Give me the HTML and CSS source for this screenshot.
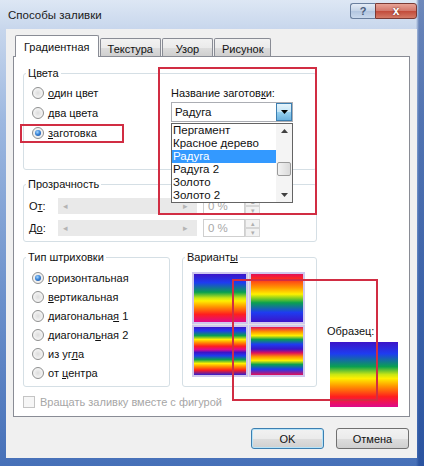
FILE: index.html
```html
<!DOCTYPE html>
<html lang="ru">
<head>
  <meta charset="UTF-8">
  <title>Способы заливки</title>
  <link rel="stylesheet" href="styles.css">
</head>
<body>
  <div class="window">
    <header class="titlebar">
      <span class="title">Способы заливки</span>
      <div class="caption-buttons">
        <span class="cap-btn cap-help">?</span>
        <span class="cap-btn cap-close">x</span>
      </div>
    </header>

    <div class="client">
      <div class="tabs">
        <div class="tab active">Градиентная</div>
        <div class="tab">Текстура</div>
        <div class="tab">Узор</div>
        <div class="tab">Рисунок</div>
      </div>

      <div class="panel">
        <div class="main">
          <div class="left-col">
            <!-- Цвета -->
            <div class="group colors">
              <div class="group-title">Цвета</div>
              <div class="colors-body">
                <div class="radios">
                  <div class="radio"><span class="radio-dot"></span><span><u>о</u>дин цвет</span></div>
                  <div class="radio"><span class="radio-dot"></span><span><u>д</u>ва цвета</span></div>
                  <div class="radio"><span class="radio-dot checked"></span><span><u>з</u>аготовка</span></div>
                </div>
                <div class="preset">
                  <div class="preset-label">Название заготов<u>к</u>и:</div>
                  <div class="combo">
                    <span class="combo-value">Радуга</span>
                    <span class="combo-btn">
                      <svg width="7" height="4" viewBox="0 0 7 4"><path d="M0 0h7L3.5 4z" fill="#000"/></svg>
                    </span>
                    <div class="dropdown">
                      <div class="items">
                        <div class="item">Пергамент</div>
                        <div class="item">Красное дерево</div>
                        <div class="item selected">Радуга</div>
                        <div class="item">Радуга 2</div>
                        <div class="item">Золото</div>
                        <div class="item">Золото 2</div>
                      </div>
                      <div class="scrollbar">
                        <span class="sb-arrow">
                          <svg width="7" height="4" viewBox="0 0 7 4"><path d="M0 4h7L3.5 0z" fill="#404040"/></svg>
                        </span>
                        <span class="sb-track"><span class="sb-thumb"></span></span>
                        <span class="sb-arrow">
                          <svg width="7" height="4" viewBox="0 0 7 4"><path d="M0 0h7L3.5 4z" fill="#404040"/></svg>
                        </span>
                      </div>
                    </div>
                  </div>
                </div>
              </div>
            </div>

            <!-- Прозрачность -->
            <div class="group transparency">
              <div class="group-title">Прозрачность</div>
              <div class="slider-row">
                <span class="slider-label">О<u>т</u>:</span>
                <span class="slider">
                  <span class="slider-arrow">&#9666;</span>
                  <span class="slider-arrow">&#9656;</span>
                </span>
                <span class="spin">
                  <span class="spin-value">0 %</span>
                  <span class="spin-btns">
                    <span class="spin-btn">&#9652;</span>
                    <span class="spin-btn">&#9662;</span>
                  </span>
                </span>
              </div>
              <div class="slider-row">
                <span class="slider-label">Д<u>о</u>:</span>
                <span class="slider">
                  <span class="slider-arrow">&#9666;</span>
                  <span class="slider-arrow">&#9656;</span>
                </span>
                <span class="spin">
                  <span class="spin-value">0 %</span>
                  <span class="spin-btns">
                    <span class="spin-btn">&#9652;</span>
                    <span class="spin-btn">&#9662;</span>
                  </span>
                </span>
              </div>
            </div>

            <div class="bottom-groups">
              <!-- Тип штриховки -->
              <div class="group hatch">
                <div class="group-title">Тип штриховки</div>
                <div class="radios hatch-radios">
                  <div class="radio"><span class="radio-dot checked"></span><span><u>г</u>оризонтальная</span></div>
                  <div class="radio"><span class="radio-dot"></span><span><u>в</u>ертикальная</span></div>
                  <div class="radio"><span class="radio-dot"></span><span>диагональна<u>я</u> 1</span></div>
                  <div class="radio"><span class="radio-dot"></span><span>диагонал<u>ь</u>ная 2</span></div>
                  <div class="radio"><span class="radio-dot"></span><span>из уг<u>л</u>а</span></div>
                  <div class="radio"><span class="radio-dot"></span><span>от <u>ц</u>ентра</span></div>
                </div>
              </div>

              <!-- Варианты -->
              <div class="group variants">
                <div class="group-title">Вариант<u>ы</u></div>
                <div class="swatches">
                  <div class="swatch"><div class="swatch-fill rainbow"></div></div>
                  <div class="swatch"><div class="swatch-fill rainbow-rev"></div></div>
                  <div class="swatch"><div class="swatch-fill rainbow-double"></div></div>
                  <div class="swatch"><div class="swatch-fill rainbow-double-rev"></div></div>
                </div>
              </div>
            </div>

            <div class="check-row">
              <span class="checkbox"></span>
              <span>Вращать заливку вместе с фигурой</span>
            </div>
          </div>

          <div class="sample-col">
            <div class="sample-label">Образец:</div>
            <div class="sample rainbow"></div>
          </div>
        </div>
      </div>

      <div class="buttons">
        <button class="btn btn-default">OK</button>
        <button class="btn">Отмена</button>
      </div>
    </div>

    <!-- red annotation frames -->
    <span class="mark mark-preset-radio"></span>
    <span class="mark mark-preset"></span>
    <span class="mark mark-variants"></span>
  </div>
</body>
</html>
```

FILE: styles.css
```css
* {
  box-sizing: border-box;
}

body {
  margin: 0;
  font-family: "Liberation Sans", Arial, sans-serif;
  font-size: 11px;
  color: #111;
  background: #fff;
}

u {
  text-decoration: underline;
  text-underline-offset: 1px;
}

.window {
  position: relative;
  width: 424px;
  height: 466px;
  padding: 0 7px 8px 6px;
  display: flex;
  flex-direction: column;
  background:
    linear-gradient(to right, rgba(255, 255, 255, 0) 416px, rgba(20, 60, 140, 0.55) 419px),
    linear-gradient(to bottom, #dde7f4 0, #c7d6ec 30px, #9db8e0 120px, #6b90cb 300px, #4670b8 100%);
}

/* title bar */
.titlebar {
  height: 29px;
  display: flex;
  justify-content: space-between;
  align-items: flex-start;
}

.title {
  margin: 8px 0 0 2px;
  font-size: 11.5px;
  line-height: 14px;
  color: #1b1b1b;
}

.caption-buttons {
  display: flex;
  margin-top: 3px;
}

.cap-btn {
  height: 16px;
  display: flex;
  align-items: center;
  justify-content: center;
  font-weight: bold;
  font-size: 11px;
  border: 1px solid #6a7f9e;
}

.cap-help {
  width: 25px;
  border-radius: 3px 0 0 3px;
  border-right: none;
  background: linear-gradient(#e4ecf6, #c3d2e6 50%, #b2c5df 51%, #c9d8ec);
  color: #4a5d7c;
}

.cap-close {
  width: 42px;
  border-radius: 0 3px 3px 0;
  border-color: #7a3a34;
  background: linear-gradient(#e8a396, #d2766a 50%, #c24a3a 51%, #d47a66);
  color: #fff;
  font-size: 12px;
  text-shadow: 0 0 2px #5a1a12;
}

/* client area */
.client {
  flex: 1;
  display: flex;
  flex-direction: column;
  background: #f0f0f0;
  padding: 4px 7px 9px 7px;
}

.tabs {
  display: flex;
  align-items: flex-end;
  height: 24px;
  padding-left: 2px;
  margin-bottom: -1px;
  position: relative;
  z-index: 1;
}

.tab {
  height: 18px;
  margin-bottom: 1px;
  margin-left: 1px;
  padding: 3px 7px 0;
  min-width: 51px;
  text-align: center;
  line-height: 14px;
  border: 1px solid #898c95;
  border-bottom: none;
  border-radius: 2px 2px 0 0;
  background: linear-gradient(#f2f2f2, #ebebeb 50%, #dddddd 51%, #cfcfcf);
}

.tab.active {
  height: 22px;
  margin: 0;
  padding: 4px 8px 0;
  background: #fff;
}

.panel {
  flex: 1;
  background: #fff;
  border: 1px solid #898c95;
  padding: 16px 0 6px 9px;
}

.main {
  display: flex;
}

.left-col {
  width: 294px;
}

/* group boxes */
.group {
  border: 1px solid #d5dfe5;
  border-radius: 3px;
}

.group-title {
  display: table;
  margin: -9px 0 0 2px;
  padding: 0 2px;
  line-height: 16px;
  background: #fff;
}

.colors {
  height: 97px;
}

.colors-body {
  display: flex;
  margin-top: 2px;
}

.radios {
  width: 147px;
  padding-left: 8px;
}

.radio {
  height: 20px;
  display: flex;
  align-items: center;
  gap: 4px;
}

.hatch-radios .radio {
  height: 19px;
}

.radio-dot {
  position: relative;
  width: 12px;
  height: 12px;
  border-radius: 50%;
  border: 1px solid #8e8f8f;
  background: radial-gradient(circle, #dcdcdc 0, #eeeeee 50%, #fbfbfb 100%);
}

.radio-dot.checked::after {
  content: "";
  position: absolute;
  left: 2px;
  top: 2px;
  width: 6px;
  height: 6px;
  border-radius: 50%;
  background: radial-gradient(circle at 40% 35%, #a8d8ff 0, #3c86d8 45%, #17489a 100%);
}

/* preset combo */
.preset {
  padding-top: 2px;
}

.preset-label {
  line-height: 16px;
}

.combo {
  position: relative;
  width: 122px;
  height: 20px;
  margin-top: 1px;
  display: flex;
  border: 1px solid #abadb3;
  background: #fff;
}

.combo-value {
  flex: 1;
  padding-left: 3px;
  line-height: 18px;
  font-size: 11.5px;
}

.combo-btn {
  width: 16px;
  display: flex;
  align-items: center;
  justify-content: center;
  border: 1px solid #3c7fb1;
  background: linear-gradient(#e5f4fc, #c4e5f6 50%, #98d1ef 51%, #6cb2df);
}

.dropdown {
  position: absolute;
  left: -1px;
  top: 20px;
  width: 122px;
  height: 80px;
  display: flex;
  border: 1px solid #646464;
  background: #fff;
  z-index: 2;
}

.items {
  flex: 1;
  padding-top: 0;
}

.item {
  height: 13px;
  line-height: 13px;
  padding-left: 1px;
  font-size: 11.5px;
  white-space: nowrap;
}

.item.selected {
  background: #3399ff;
  color: #fff;
}

.scrollbar {
  width: 16px;
  display: flex;
  flex-direction: column;
  background: #f4f4f4;
}

.sb-arrow {
  height: 14px;
  display: flex;
  align-items: center;
  justify-content: center;
}

.sb-track {
  flex: 1;
  padding-top: 24px;
}

.sb-thumb {
  display: block;
  margin: 0 1px;
  height: 14px;
  border: 1px solid #9a9a9a;
  border-radius: 2px;
  background: linear-gradient(to right, #f2f2f2, #dadada);
}

/* transparency */
.transparency {
  margin-top: 14px;
  padding-bottom: 2px;
}

.transparency .group-title {
  margin-bottom: 3px;
}

.slider-row {
  height: 22px;
  display: flex;
  align-items: center;
  padding-left: 5px;
}

.slider-label {
  width: 29px;
}

.slider {
  width: 139px;
  height: 16px;
  display: flex;
  justify-content: space-between;
  align-items: center;
  padding: 0 9px 0 5px;
  background: #e9e9e9;
  color: #b4b4b4;
  font-size: 9px;
}

.spin {
  display: flex;
  height: 18px;
  margin-left: 6px;
}

.spin-value {
  width: 42px;
  padding-left: 4px;
  line-height: 16px;
  border: 1px solid #cfcfcf;
  color: #a8a8a8;
  font-size: 11.5px;
}

.spin-btns {
  width: 15px;
  display: flex;
  flex-direction: column;
}

.spin-btn {
  flex: 1;
  border: 1px solid #d6d6d6;
  background: #f2f2f2;
  color: #b0b0b0;
  font-size: 7px;
  line-height: 7px;
  text-align: center;
}

/* hatch + variants */
.bottom-groups {
  display: flex;
  margin-top: 15px;
}

.hatch {
  width: 147px;
  padding-bottom: 4px;
}

.hatch .group-title {
  margin-bottom: 3px;
}

.variants {
  width: 135px;
  margin-left: 12px;
}

.swatches {
  display: grid;
  grid-template-columns: 56px 56px;
  gap: 1px;
  margin: 7px 0 8px 9px;
  background: #e4e4e4;
  width: 113px;
}

.swatch {
  padding: 2px;
  background: #cfc7ee;
}

.swatch-fill {
  height: 48px;
}

.rainbow {
  background: linear-gradient(#3c14c8 0%, #1e3cf0 18%, #0aa050 38%, #c8e614 50%, #fff000 56%, #ff9600 68%, #ff1e1e 84%, #dc0a8c 100%);
}

.rainbow-rev {
  background: linear-gradient(#e0105a 0%, #ff2a1e 10%, #ff9600 28%, #fff000 42%, #8cd21e 50%, #0aa050 60%, #1e3cf0 80%, #3c14c8 100%);
}

.rainbow-double {
  background: linear-gradient(#3c14c8 0%, #1e3cf0 8%, #0aa050 18%, #fff000 26%, #ff9600 32%, #ff1e1e 40%, #dc0a8c 47%, #3c14c8 53%, #1e3cf0 60%, #0aa050 68%, #fff000 76%, #ff9600 82%, #ff1e1e 90%, #3020d0 100%);
}

.rainbow-double-rev {
  background: linear-gradient(#e0105a 0%, #ff9600 10%, #fff000 18%, #0aa050 26%, #1e3cf0 36%, #3c14c8 46%, #e0105a 54%, #ff9600 62%, #fff000 70%, #0aa050 78%, #1e3cf0 88%, #e0105a 100%);
}

.check-row {
  display: flex;
  align-items: center;
  gap: 5px;
  height: 16px;
  margin-top: 7px;
  color: #a6a6a6;
}

.checkbox {
  width: 12px;
  height: 12px;
  border: 1px solid #c4c4c4;
  background: #f6f6f6;
}

/* sample */
.sample-col {
  align-self: flex-end;
  margin: 0 0 3px 10px;
}

.sample-label {
  line-height: 16px;
}

.sample {
  width: 68px;
  height: 65px;
  margin: 3px 0 0 3px;
}

/* buttons */
.buttons {
  display: flex;
  justify-content: flex-end;
  gap: 12px;
  margin-top: 11px;
  padding-right: 1px;
}

.btn {
  width: 73px;
  height: 21px;
  font-family: inherit;
  font-size: 11px;
  color: #111;
  border: 1px solid #707070;
  border-radius: 3px;
  background: linear-gradient(#f2f2f2, #ebebeb 50%, #dddddd 51%, #cfcfcf);
}

.btn-default {
  border-color: #3c7fb1;
  box-shadow: inset 0 0 0 1px #b6e3f8;
}

/* red annotation frames drawn over the screenshot */
.mark {
  position: absolute;
  border: 2px solid #d12d43;
  z-index: 5;
}

.mark-preset-radio {
  left: 20px;
  top: 124px;
  width: 104px;
  height: 19px;
}

.mark-preset {
  left: 158px;
  top: 67px;
  width: 159px;
  height: 148px;
}

.mark-variants {
  left: 232px;
  top: 279px;
  width: 146px;
  height: 122px;
}
```
